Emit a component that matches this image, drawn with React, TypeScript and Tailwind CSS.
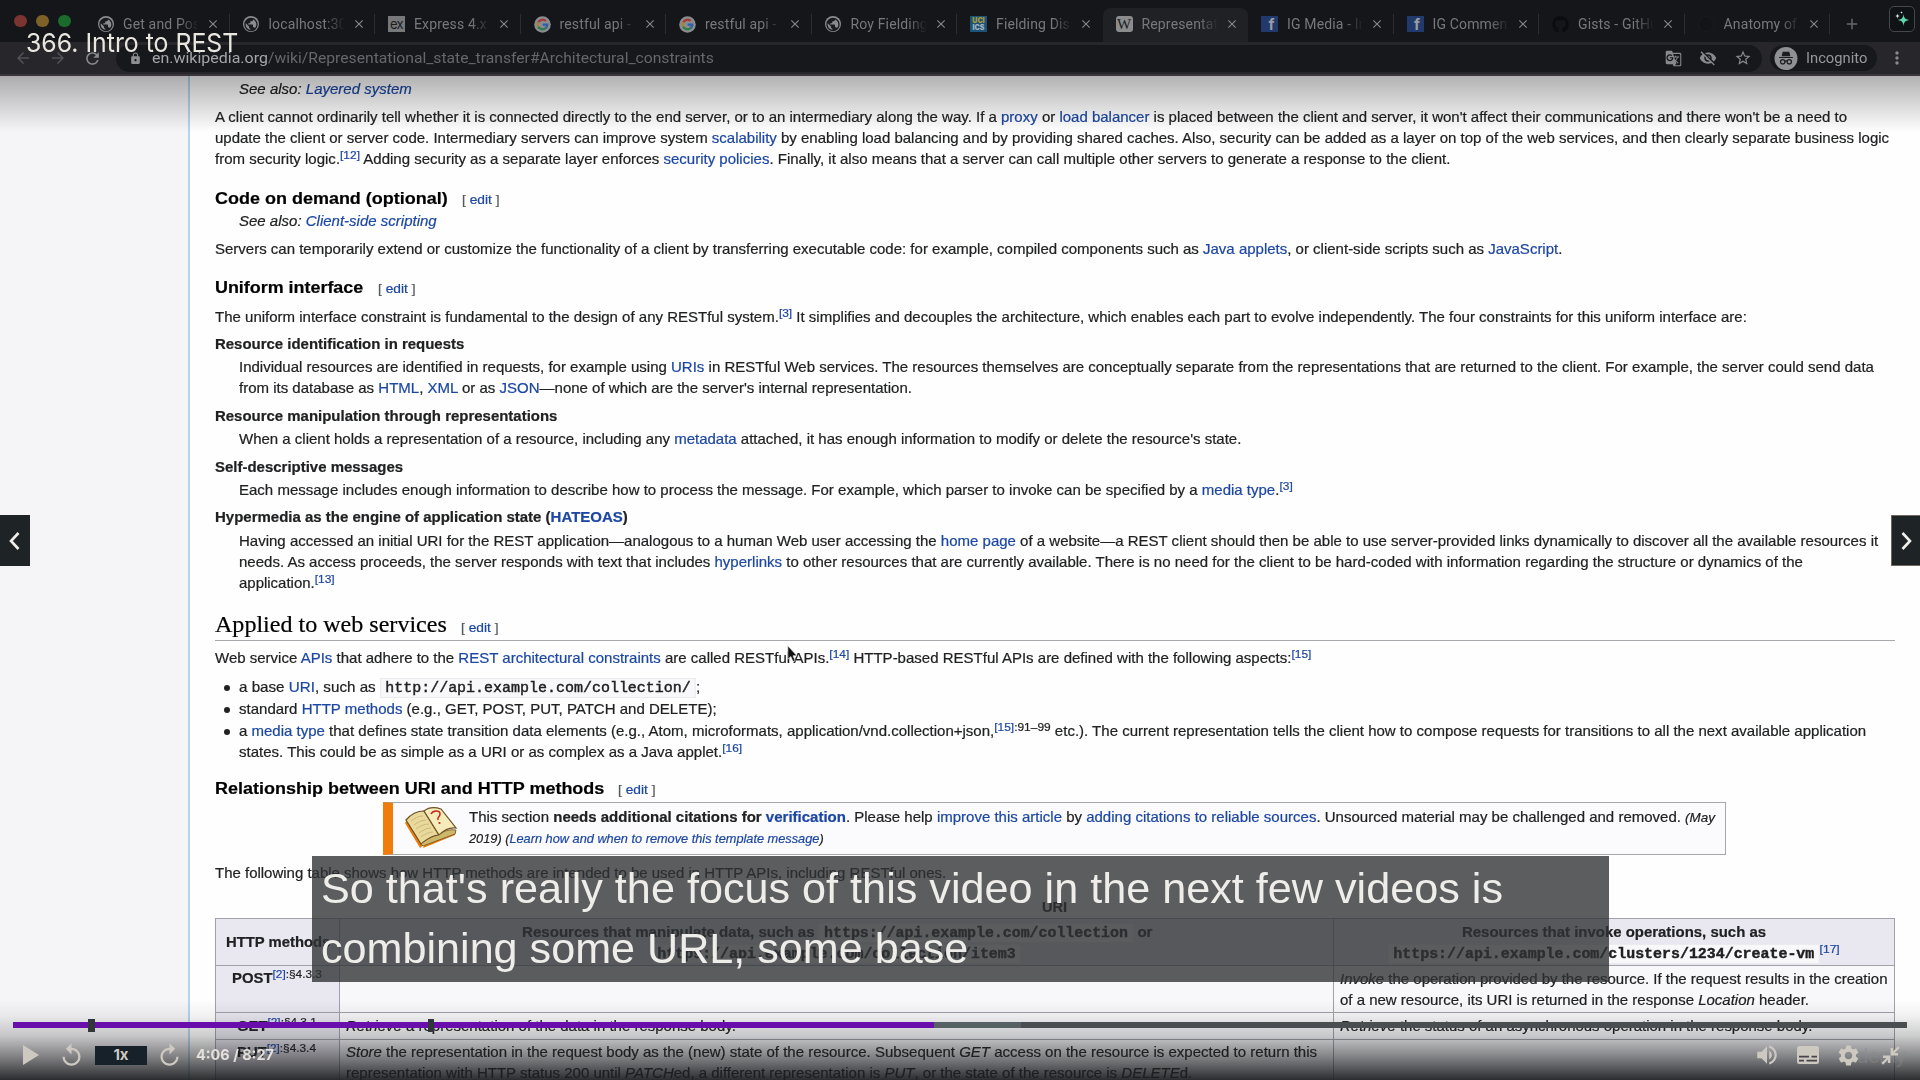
import { useLayoutEffect, useRef, useState } from "react";
import type { ReactNode } from "react";
import {
  MdArrowBack,
  MdArrowForward,
  MdRefresh,
  MdLock,
  MdGTranslate,
  MdVisibilityOff,
  MdStarBorder,
  MdMoreVert,
  MdClose,
  MdAdd,
  MdReplay,
  MdVolumeUp,
  MdSettings,
  MdPublic,
} from "react-icons/md";
import { FaGithub } from "react-icons/fa";

/* A single line of text, stretched horizontally to an exact width. */
function Fit({ w, className = "", children }: { w: number; className?: string; children: ReactNode }) {
  const ref = useRef<HTMLSpanElement>(null);
  const [scale, setScale] = useState(1);
  useLayoutEffect(() => {
    if (ref.current && ref.current.offsetWidth > 0) setScale(w / ref.current.offsetWidth);
  }, [w]);
  return (
    <span className={"block h-[21px] leading-[21px] shrink-0 " + className} style={{ width: w }}>
      <span ref={ref} className="inline-block origin-left whitespace-pre" style={{ transform: `scaleX(${scale})` }}>
        {children}
      </span>
    </span>
  );
}

const A = ({ children }: { children: ReactNode }) => <a className="text-[#1c47a3]">{children}</a>;
const Sup = ({ children }: { children: ReactNode }) => (
  <sup className="align-[5px] text-[11.3px] leading-none font-normal top-0 text-[#1c47a3]">{children}</sup>
);
const Sec = ({ children }: { children: ReactNode }) => <span className="text-[#202122]">{children}</span>;
const Code = ({ children }: { children: ReactNode }) => (
  <code className="border border-[#ebebee] bg-[#f8f8fa] px-[4px] py-[1px] font-['Liberation_Mono',monospace] text-[14px] leading-none [-webkit-text-stroke:0.4px]">
    {children}
  </code>
);

function Edit() {
  return (
    <Fit w={37} className="text-[13px] text-[#54595d]">
      [ <A>edit</A> ]
    </Fit>
  );
}

function Heading({ w, className, children }: { w: number; className: string; children: ReactNode }) {
  return (
    <div className={"flex h-[21px] items-baseline gap-[14px] " + className}>
      <Fit w={w} className="text-[16.8px] font-bold text-black">
        {children}
      </Fit>
      <Edit />
    </div>
  );
}

function Globe() {
  return (
    <span className="flex size-[16px] items-center justify-center rounded-full bg-[#8b8c8f] text-[#1a1b1f]">
      <MdPublic size={17} />
    </span>
  );
}
function Google() {
  return (
    <svg width="17" height="17" viewBox="0 0 17 17">
      <circle cx="8.5" cy="8.5" r="8.3" fill="#8b8c8f" />
      <g fill="none" strokeWidth="2.2">
        <path d="M4.3 6.3A4.8 4.8 0 0 1 11.8 5" stroke="#a33a33" />
        <path d="M4.3 10.7a4.8 4.8 0 0 1 0-4.4" stroke="#a98222" />
        <path d="M11.6 12.2a4.8 4.8 0 0 1-7.3-1.5" stroke="#2b7d44" />
        <path d="M8.6 8.6h4.7a4.8 4.8 0 0 1-1.7 3.6" stroke="#2f5fa8" />
      </g>
    </svg>
  );
}
const Ex = () => (
  <span className="flex h-[16px] w-[17px] items-center justify-center bg-[#77787a] font-['Inter',sans-serif] text-[13px] leading-none tracking-tighter text-[#1b1c20]">ex</span>
);
const Uci = () => (
  <span className="flex h-[16px] w-[17px] flex-col items-center justify-center bg-[#1d5377] font-['Inter',sans-serif] text-[7px] leading-[7px] font-black">
    <span className="text-[#a89a3d]">UCI</span>
    <span className="text-[#9db3bd]">ICS</span>
  </span>
);
const Wiki = () => (
  <span className="flex h-[16px] w-[17px] items-center justify-center rounded-[3px] bg-[#8b8c8e] font-['Liberation_Serif',serif] text-[15px] leading-none text-[#1b1c20]">W</span>
);
const Fb = () => (
  <span className="flex h-[16px] w-[17px] items-end justify-center bg-[#22396b] pl-[4px] font-['Inter',sans-serif] text-[15px] leading-[14px] font-bold text-[#9a9ca3]">f</span>
);
const Gh = () => <FaGithub size={17} color="#0b0c0f" />;
const Faint = () => <span className="size-[16px] rounded-full border border-[#1a1c1f] bg-[#131418]" />;

const tabs: { icon: ReactNode; label: string; active?: boolean; sep?: boolean }[] = [
  { icon: <Globe />, label: "Get and Post", sep: true },
  { icon: <Globe />, label: "localhost:300", sep: true },
  { icon: <Ex />, label: "Express 4.x -", sep: true },
  { icon: <Google />, label: "restful api - G", sep: true },
  { icon: <Google />, label: "restful api - G", sep: true },
  { icon: <Globe />, label: "Roy Fielding'", sep: true },
  { icon: <Uci />, label: "Fielding Disse" },
  { icon: <Wiki />, label: "Representati", active: true },
  { icon: <Fb />, label: "IG Media - Ins", sep: true },
  { icon: <Fb />, label: "IG Comment", sep: true },
  { icon: <Gh />, label: "Gists - GitHu", sep: true },
  { icon: <Faint />, label: "Anatomy of a", sep: true },
];

function Browser() {
  return (
    <header className="h-[76px] border-b-2 border-[#3a343b] bg-[#27272b] font-['Roboto',sans-serif]">
      <div className="flex h-[42px] items-end bg-[#15161a]">
        <div className="flex h-full w-[84px] items-center gap-[9px] pl-[14px]">
          <span className="h-[12px] w-[13px] rounded-full bg-[#7c3430]" />
          <span className="h-[12px] w-[13px] rounded-full bg-[#7d6126]" />
          <span className="h-[12px] w-[13px] rounded-full bg-[#1b6b2c]" />
        </div>
        {tabs.map((t, i) => (
          <div
            key={i}
            className={
              "flex h-[34px] w-[145.5px] shrink-0 items-center rounded-t-lg pb-[2px] pl-[13px] " + (t.active ? "bg-[#202125]" : "")
            }
          >
            <span className="flex w-[17px] justify-center">{t.icon}</span>
            <span className="ml-[9px] w-[76px] overflow-hidden text-[14px] tracking-[0.15px] whitespace-nowrap text-[#77787c] [mask-image:linear-gradient(90deg,#000_75%,transparent)]">
              {t.label}
            </span>
            <span className="ml-[7px] text-[#85868a]">
              <MdClose size={14} />
            </span>
            {t.sep && <span className="ml-auto h-[20px] w-px bg-[#2c2d31]" />}
          </div>
        ))}
        <span className="flex h-[34px] items-center pb-[2px] pl-[13px] text-[#66676b]">
          <MdAdd size={18} />
        </span>
      </div>
      <div className="flex h-[32px] items-center">
        <div className="flex w-[116px] items-center pl-[14px]">
          <MdArrowBack size={18} color="#515256" />
          <MdArrowForward size={18} color="#515256" className="ml-[17px]" />
          <MdRefresh size={19} color="#8a8b8e" className="ml-[16px]" />
        </div>
        <div className="flex h-[27px] w-[1646px] items-center rounded-full bg-[#17181c] pl-[13px] text-[15px]">
          <MdLock size={13} color="#8d8e90" />
          <Fit w={116} className="ml-[10px] text-[#a5a6a8]">
            en.wikipedia.org
          </Fit>
          <Fit w={445.5} className="text-[#66676b]">
            /wiki/Representational_state_transfer#Architectural_constraints
          </Fit>
          <div className="ml-auto flex items-center gap-[17px] pr-[10px] text-[#88898c]">
            <MdGTranslate size={17} />
            <MdVisibilityOff size={18} />
            <MdStarBorder size={18} />
          </div>
        </div>
        <div className="ml-[8px] flex h-[26px] w-[107px] items-center rounded-full bg-[#17181c] pl-[4px]">
          <svg width="24" height="23" viewBox="0 0 24 24">
            <circle cx="12" cy="12" r="12" fill="#8f9093" />
            <path d="M8.5 5h7l1 4.6h-9zM4.8 10.4h14.4v1H4.8z" fill="#1c1d20" />
            <g fill="none" stroke="#1c1d20" strokeWidth="1.3">
              <circle cx="8.6" cy="15.4" r="2.3" />
              <circle cx="15.4" cy="15.4" r="2.3" />
              <path d="M10.8 15c.8-.6 1.6-.6 2.4 0" />
            </g>
          </svg>
          <Fit w={61} className="ml-[8px] text-[14.5px] text-[#97989b]">
            Incognito
          </Fit>
        </div>
        <MdMoreVert size={20} color="#88898c" className="ml-[10px]" />
      </div>
    </header>
  );
}

function Book() {
  return (
    <svg width="53" height="42" viewBox="0 0 53 42">
      <path d="M3 12 20 37l-5 4L0 16zM20 37l31-13-1 4-32 13z" fill="#ee7c0d" />
      <path d="M1 13C6 7 13 4 19 4l15 24c-6 0-12 4-18 9z" fill="#e9d99b" stroke="#6b5222" strokeWidth="1.2" />
      <path d="M19 4c5-4 11-4 17-2l15 19c-7-1-12 2-17 7z" fill="#f6ebbb" stroke="#6b5222" strokeWidth="1.2" />
      <path d="M16 37c6-5 12-8 18-9 5-4 10-6 17-5l-1 4-32 12z" fill="#cdb76b" stroke="#6b5222" strokeWidth=".8" />
      <path d="M6 14c4-3 7-5 12-5M9 18c4-3 8-5 12-5M11 22c4-3 8-5 13-5M14 26c4-3 8-5 12-5M16 30c4-3 8-5 12-5" stroke="#cdb981" fill="none" />
      <path d="M26 7c2-4 9-4 9 0 0 3-3 3-2 6" fill="none" stroke="#c5271d" strokeWidth="1.5" />
      <circle cx="34.500" cy="16" r="1.100" fill="#c5271d" />
    </svg>
  );
}

const bullet = "ml-[9px] mr-[9px] size-[6px] rounded-full bg-[#202122]";
const cell = "border-r border-[#a0a1a9]";

function Article() {
  return (
    <main className="flex h-[1004px] overflow-hidden bg-[#f5f4f7] font-['Liberation_Sans',sans-serif] text-[14.2px] text-[#202122] [-webkit-text-stroke:0.2px]">
      <div className="ml-[188px] w-[1732px] shrink-0 border-l-2 border-[#b4d5ea] bg-[#fefefe] pl-[25.4px]">
        <Fit w={172.5} className="mt-[3px] ml-[24px] italic">
          See also: <A>Layered system</A>
        </Fit>
        <Fit w={1632.5} className="mt-[7px]">
          A client cannot ordinarily tell whether it is connected directly to the end server, or to an intermediary along the way. If a <A>proxy</A> or <A>load balancer</A> is placed between the client and server, it won't affect their communications and there won't be a need to
        </Fit>
        <Fit w={1674.5}>
          update the client or server code. Intermediary servers can improve system <A>scalability</A> by enabling load balancing and by providing shared caches. Also, security can be added as a layer on top of the web services, and then clearly separate business logic
        </Fit>
        <Fit w={1235}>
          from security logic.<Sup>[12]</Sup> Adding security as a separate layer enforces <A>security policies</A>. Finally, it also means that a server can call multiple other servers to generate a response to the client.
        </Fit>

        <Heading w={232.5} className="mt-[18px]">
          Code on demand (optional)
        </Heading>
        <Fit w={197.8} className="mt-[2px] ml-[24px] italic">
          See also: <A>Client-side scripting</A>
        </Fit>
        <Fit w={1347} className="mt-[7px]">
          Servers can temporarily extend or customize the functionality of a client by transferring executable code: for example, compiled components such as <A>Java applets</A>, or client-side scripts such as <A>JavaScript</A>.
        </Fit>

        <Heading w={148.3} className="mt-[17px]">
          Uniform interface
        </Heading>
        <Fit w={1531.7} className="mt-[9px]">
          The uniform interface constraint is fundamental to the design of any RESTful system.<Sup>[3]</Sup> It simplifies and decouples the architecture, which enables each part to evolve independently. The four constraints for this uniform interface are:
        </Fit>
        <Fit w={249.8} className="mt-[6px] font-bold">
          Resource identification in requests
        </Fit>
        <Fit w={1635} className="mt-[2px] ml-[24px]">
          Individual resources are identified in requests, for example using <A>URIs</A> in RESTful Web services. The resources themselves are conceptually separate from the representations that are returned to the client. For example, the server could send data
        </Fit>
        <Fit w={672.7} className="ml-[24px]">
          from its database as <A>HTML</A>, <A>XML</A> or as <A>JSON</A>—none of which are the server's internal representation.
        </Fit>
        <Fit w={342.6} className="mt-[7px] font-bold">
          Resource manipulation through representations
        </Fit>
        <Fit w={1002} className="mt-[2px] ml-[24px]">
          When a client holds a representation of a resource, including any <A>metadata</A> attached, it has enough information to modify or delete the resource's state.
        </Fit>
        <Fit w={187.8} className="mt-[7px] font-bold">
          Self-descriptive messages
        </Fit>
        <Fit w={1053.7} className="mt-[2px] ml-[24px]">
          Each message includes enough information to describe how to process the message. For example, which parser to invoke can be specified by a <A>media type</A>.<Sup>[3]</Sup>
        </Fit>
        <Fit w={413} className="mt-[6px] font-bold">
          Hypermedia as the engine of application state (<A>HATEOAS</A>)
        </Fit>
        <Fit w={1639.5} className="mt-[3px] ml-[24px]">
          Having accessed an initial URI for the REST application—analogous to a human Web user accessing the <A>home page</A> of a website—a REST client should then be able to use server-provided links dynamically to discover all the available resources it
        </Fit>
        <Fit w={1563.5} className="ml-[24px]">
          needs. As access proceeds, the server responds with text that includes <A>hyperlinks</A> to other resources that are currently available. There is no need for the client to be hard-coded with information regarding the structure or dynamics of the
        </Fit>
        <Fit w={96} className="ml-[24px]">
          application.<Sup>[13]</Sup>
        </Fit>

        <div className="mt-[20px] mr-[25px] flex h-[27px] items-baseline gap-[14px] border-b border-[#a8a9ad]">
          <Fit w={232} className="font-['Liberation_Serif',serif] text-[22.5px] text-black">
            Applied to web services
          </Fit>
          <Edit />
        </div>
        <Fit w={1096} className="mt-[7px]">
          Web service <A>APIs</A> that adhere to the <A>REST architectural constraints</A> are called RESTful APIs.<Sup>[14]</Sup> HTTP-based RESTful APIs are defined with the following aspects:<Sup>[15]</Sup>
        </Fit>
        <div className="mt-[8px] flex items-center">
          <span className={bullet} />
          <Fit w={461}>
            a base <A>URI</A>, such as <Code>http://api.example.com/collection/</Code>;
          </Fit>
        </div>
        <div className="mt-px flex items-center">
          <span className={bullet} />
          <Fit w={477.6}>
            standard <A>HTTP methods</A> (e.g., GET, POST, PUT, PATCH and DELETE);
          </Fit>
        </div>
        <div className="mt-px flex items-center">
          <span className={bullet} />
          <Fit w={1627.6}>
            a <A>media type</A> that defines state transition data elements (e.g., Atom, microformats, application/vnd.collection+json,<Sup>[15]<Sec>:91–99</Sec></Sup> etc.). The current representation tells the client how to compose requests for transitions to all the next available application
          </Fit>
        </div>
        <Fit w={503} className="ml-[24px]">
          states. This could be as simple as a URI or as complex as a Java applet.<Sup>[16]</Sup>
        </Fit>

        <Heading w={389} className="mt-[15px]">
          Relationship between URI and HTTP methods
        </Heading>
        <div className="mt-[3px] ml-[168px] flex h-[53px] w-[1343px] border border-l-[10px] border-[#a5a7ab] border-l-[#f07d0b] bg-[#fbfafc]">
          <div className="w-[75.5px] pt-[4px] pl-[12px]">
            <Book />
          </div>
          <div className="pt-[4px]">
            <Fit w={1246}>
              This section <b>needs additional citations for <A>verification</A></b>. Please help <A>improve this article</A> by <A>adding citations to reliable sources</A>. Unsourced material may be challenged and removed. <i className="text-[12.7px]">(May</i>
            </Fit>
            <Fit w={355} className="mt-px text-[12.7px] italic">
              2019) (<A>Learn how and when to remove this template message</A>)
            </Fit>
          </div>
        </div>
        <Fit w={731.5} className="mt-[8px]">
          The following table shows how HTTP methods are intended to be used in HTTP APIs, including RESTful ones.
        </Fit>
        <Fit w={24.7} className="mt-[13px] ml-[827px] font-bold">
          URI
        </Fit>

        <div className="grid w-[1680px] grid-cols-[124px_994px_561px] grid-rows-[47px_47px_27px_60px] border-t border-l border-[#a0a1a9] [&>*]:border-b">
          <div className={cell + " flex justify-center bg-[#e9e8f0] pt-[13px] font-bold"}>
            <Fit w={104.5}>HTTP methods</Fit>
          </div>
          <div className={cell + " flex flex-col items-center bg-[#e9e8f0] pt-[3px] font-bold"}>
            <Fit w={630.6}>
              Resources that manipulate data, such as <Code>https://api.example.com/collection</Code> or
            </Fit>
            <Fit w={369}>
              <Code>https://api.example.com/collection/item3</Code>
            </Fit>
          </div>
          <div className={cell + " flex flex-col items-center bg-[#e9e8f0] pt-[3px] font-bold"}>
            <Fit w={304.5}>Resources that invoke operations, such as</Fit>
            <Fit w={452}>
              <Code>https://api.example.com/clusters/1234/create-vm</Code>
              <Sup>[17]</Sup>
            </Fit>
          </div>

          <div className={cell + " bg-[#e9e8f0] pt-[2px] pl-[16px] font-bold"}>
            <Fit w={90.2}>
              POST<Sup>[2]<Sec>:§4.3.3</Sec></Sup>
            </Fit>
          </div>
          <div className={cell + " bg-[#f8f8fb]"} />
          <div className={cell + " bg-[#f8f8fb] pt-[3px] pl-[6px]"}>
            <Fit w={547.3}>
              <i>Invoke</i> the operation provided by the resource. If the request results in the creation
            </Fit>
            <Fit w={469}>
              of a new resource, its URI is returned in the response <i>Location</i> header.
            </Fit>
          </div>

          <div className={cell + " bg-[#e9e8f0] pt-[3px] pl-[21px] font-bold"}>
            <Fit w={79.5}>
              GET<Sup>[2]<Sec>:§4.3.1</Sec></Sup>
            </Fit>
          </div>
          <div className={cell + " bg-[#f8f8fb] pt-[3px] pl-[6px]"}>
            <Fit w={390}>
              <i>Retrieve</i> a representation of the data in the response body.
            </Fit>
          </div>
          <div className={cell + " bg-[#f8f8fb] pt-[3px] pl-[6px]"}>
            <Fit w={472.6}>
              <i>Retrieve</i> the status of an asynchronous operation in the response body.
            </Fit>
          </div>

          <div className={cell + " bg-[#e9e8f0] pt-[2px] pl-[21px] font-bold"}>
            <Fit w={79.5}>
              PUT<Sup>[2]<Sec>:§4.3.4</Sec></Sup>
            </Fit>
          </div>
          <div className={cell + " bg-[#f8f8fb] pt-[2px] pl-[6px]"}>
            <Fit w={971}>
              <i>Store</i> the representation in the request body as the (new) state of the resource. Subsequent <i>GET</i> access on the resource is expected to return this
            </Fit>
            <Fit w={846}>
              representation with HTTP status 200 until <i>PATCH</i>ed, a different representation is <i>PUT</i>, or the state of the resource is <i>DELETE</i>d.
            </Fit>
          </div>
          <div className={cell + " bg-[#f8f8fb]"} />
        </div>
      </div>
    </main>
  );
}

function Controls() {
  return (
    <div className="absolute inset-x-0 bottom-0 h-[61px] font-['Liberation_Sans',sans-serif] text-[#cdc9c1]">
      <div className="mx-[13px] flex h-[12px] items-center">
        <div className="flex h-[6px] w-full bg-[#4b4e51]">
          <div className="flex h-full w-[921px] items-center bg-[#6a0dad]">
            <span className="ml-[75px] h-[13px] w-[7px] bg-[#31363a]" />
            <span className="ml-[333px] h-[13px] w-[6px] bg-[#31363a]" />
          </div>
          <div className="h-full w-[87px] bg-[#566165]" />
        </div>
      </div>
      <div className="flex h-[49px] items-start pt-[11px] pl-[23px]">
        <svg width="16" height="20" viewBox="0 0 16 20" className="mt-[3px]">
          <path d="M0 0v20L16 10z" fill="currentColor" />
        </svg>
        <MdReplay size={27} className="ml-[19px]" />
        <span className="mt-[4px] ml-[10px] flex h-[19px] w-[52px] items-center justify-center bg-[#16212a] font-['Inter',sans-serif] text-[15px] font-bold">
          1x
        </span>
        <MdReplay size={27} className="ml-[9px] -scale-x-100" />
        <Fit w={78} className="mt-[2px] ml-[13px] font-['Inter',sans-serif] text-[15px] font-bold text-[#e4e1dc]">
          4:06 / 8:27
        </Fit>
        <div className="mt-px mr-[20px] ml-auto flex h-[24px] items-center">
          <MdVolumeUp size={26} />
          <svg width="22" height="18" viewBox="0 0 22 18" className="ml-[17px]">
            <rect width="22" height="18" rx="2.5" fill="currentColor" />
            <path d="M2 10.6h10M14.5 10.6H20M2 14.6h5M9.5 14.6H20" stroke="#45454a" strokeWidth="1.6" />
          </svg>
          <MdSettings size={25} className="ml-[17px]" />
          <svg width="19" height="19" viewBox="0 0 19 19" className="ml-[20px]">
            <path d="M17.8 1.2 11 8M10.8 2v6.2H17M1.2 17.8 8 11M2 10.8h6.2V17" fill="none" stroke="currentColor" strokeWidth="2.4" />
          </svg>
        </div>
      </div>
    </div>
  );
}

export default function App() {
  return (
    <div className="relative h-[1080px] w-[1920px] overflow-hidden bg-[#15161a]">
      <Browser />
      <Article />

      <svg className="absolute top-[645px] left-[787px]" width="12" height="18" viewBox="0 0 12 18">
        <path d="M.8.8v13.4l3-2.6 2.2 5 2.2-1-2.2-4.8h4z" fill="#111" stroke="#eee" strokeWidth=".7" />
      </svg>

      <div className="absolute inset-x-0 top-[76px] h-[56px] bg-linear-to-b from-black/30 to-transparent" />
      <div className="absolute top-[13px] left-[26px] font-['Inter',sans-serif] text-[26px] text-[#e9e6df]">
        <Fit w={212} className="h-[44px] leading-[60px]">
          366. Intro to REST
        </Fit>
      </div>
      <div className="absolute top-[6px] left-[1889px] flex h-[26px] w-[26px] items-center justify-center rounded-[5px] border border-[#45474a] bg-[#101316]">
        <svg width="16" height="16" viewBox="0 0 16 16">
          <path d="M9.5 3c.5 3.8 1.2 5 5.5 6-4.300 1-5 2.200-5.500 6-.5-3.800-1.200-5-5.500-6 4.300-1 5-2.200 5.500-6z" fill="#5fd8ae" />
          <path d="M3.500 2.500c.3 1.800.7 2.200 2.300 2.600-1.600.4-2 .8-2.300 2.600-.3-1.800-.7-2.200-2.300-2.600 1.600-.4 2-.8 2.300-2.600zM7.500 0c.2 1 .4 1.300 1.400 1.500-1 .2-1.200.5-1.400 1.500-.2-1-.4-1.300-1.400-1.500 1-.2 1.200-.5 1.400-1.500z" fill="#d6efe6" />
        </svg>
      </div>

      <div className="absolute top-[515px] left-0 flex h-[51px] w-[30px] items-center justify-center bg-[#1e2326] pr-[2px]">
        <svg width="11" height="18" viewBox="0 0 11 18">
          <path d="M9.500 1 2 9l7.500 8" fill="none" stroke="#f1efea" strokeWidth="2.600" />
        </svg>
      </div>
      <div className="absolute top-[515px] left-[1891px] flex h-[51px] w-[29px] items-center justify-center border border-r-0 border-[#6d675f] bg-[#1e2326]">
        <svg width="11" height="18" viewBox="0 0 11 18">
          <path d="M1.500 1 9 9l-7.500 8" fill="none" stroke="#f1efea" strokeWidth="2.600" />
        </svg>
      </div>

      <div className="absolute top-[856px] left-[312px] h-[126px] w-[1297px] bg-[#2f3234]/79 pt-[2px] pl-[9px] font-['Liberation_Sans',sans-serif] text-[43px] text-[#efedea]">
        <Fit w={1182} className="h-[60px] leading-[60px]">
          So that's really the focus of this video in the next few videos is
        </Fit>
        <Fit w={647} className="h-[60px] leading-[60px]">
          combining some URL, some base
        </Fit>
      </div>

      <div className="absolute inset-x-0 bottom-0 h-[80px] bg-[linear-gradient(180deg,transparent,rgba(28,29,32,0.06)_20%,rgba(28,29,32,0.22)_45%,rgba(28,29,32,0.55)_72%,rgba(28,29,32,0.93))]" />
      <span className="absolute top-[1041px] left-[1846px] font-['Liberation_Sans',sans-serif] text-[20px] leading-[30px] text-[#8a8a8d]/50">
        udemy
      </span>
      <Controls />
    </div>
  );
}
